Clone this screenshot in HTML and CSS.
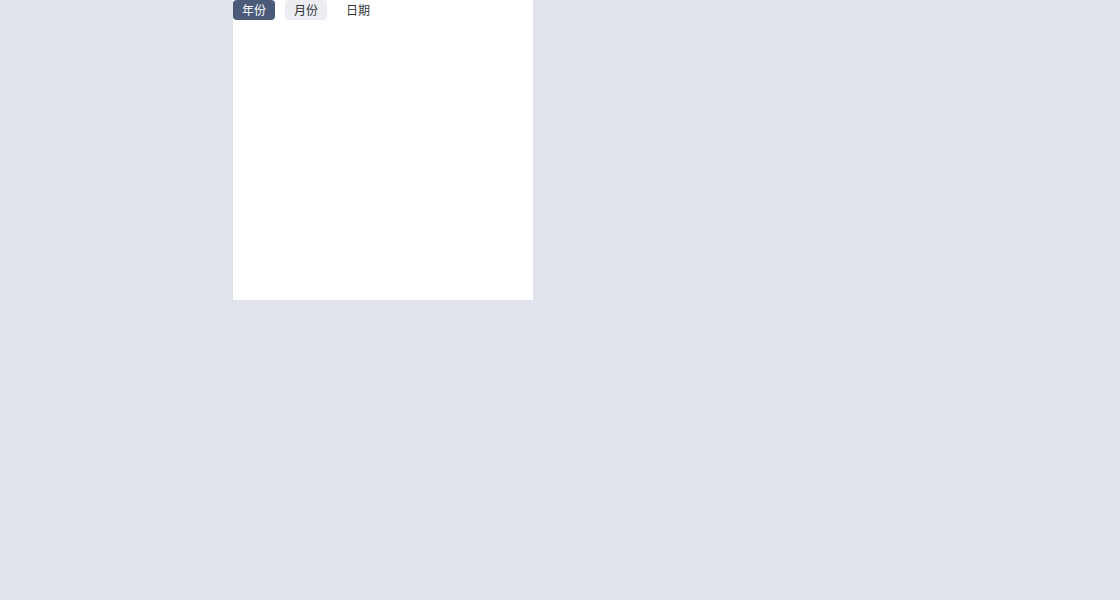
FILE: index.html
```html
<!DOCTYPE html>
<html lang="zh">
<head>
<meta charset="utf-8">
<link rel="stylesheet" href="styles.css">
</head>
<body>
<div class="page">
  <div class="panel">
    <div class="tabs">
      <button class="tab active">年份</button>
      <button class="tab soft">月份</button>
      <button class="tab">日期</button>
    </div>
  </div>
</div>
</body>
</html>
```
FILE: styles.css
```css
html, body {
  margin: 0;
  padding: 0;
  background: #e0e3ec;
  font-family: "Noto Sans CJK SC", "Noto Sans", sans-serif;
}
.page {
  width: 1120px;
  height: 600px;
  padding-left: 233px;
  box-sizing: border-box;
}
.panel {
  width: 300px;
  height: 300px;
  background: #ffffff;
}
.tabs {
  display: flex;
  gap: 10px;
}
.tab {
  height: 20px;
  padding: 0 9px;
  border: none;
  border-radius: 4px;
  background: transparent;
  color: #333;
  font-family: "Noto Sans CJK SC", "Noto Sans", sans-serif;
  font-size: 12px;
  line-height: 20px;
  cursor: pointer;
}
.tab.active {
  background: #4b5a78;
  color: #ffffff;
}
.tab.soft {
  background: #ebedf2;
  color: #333;
}
```
